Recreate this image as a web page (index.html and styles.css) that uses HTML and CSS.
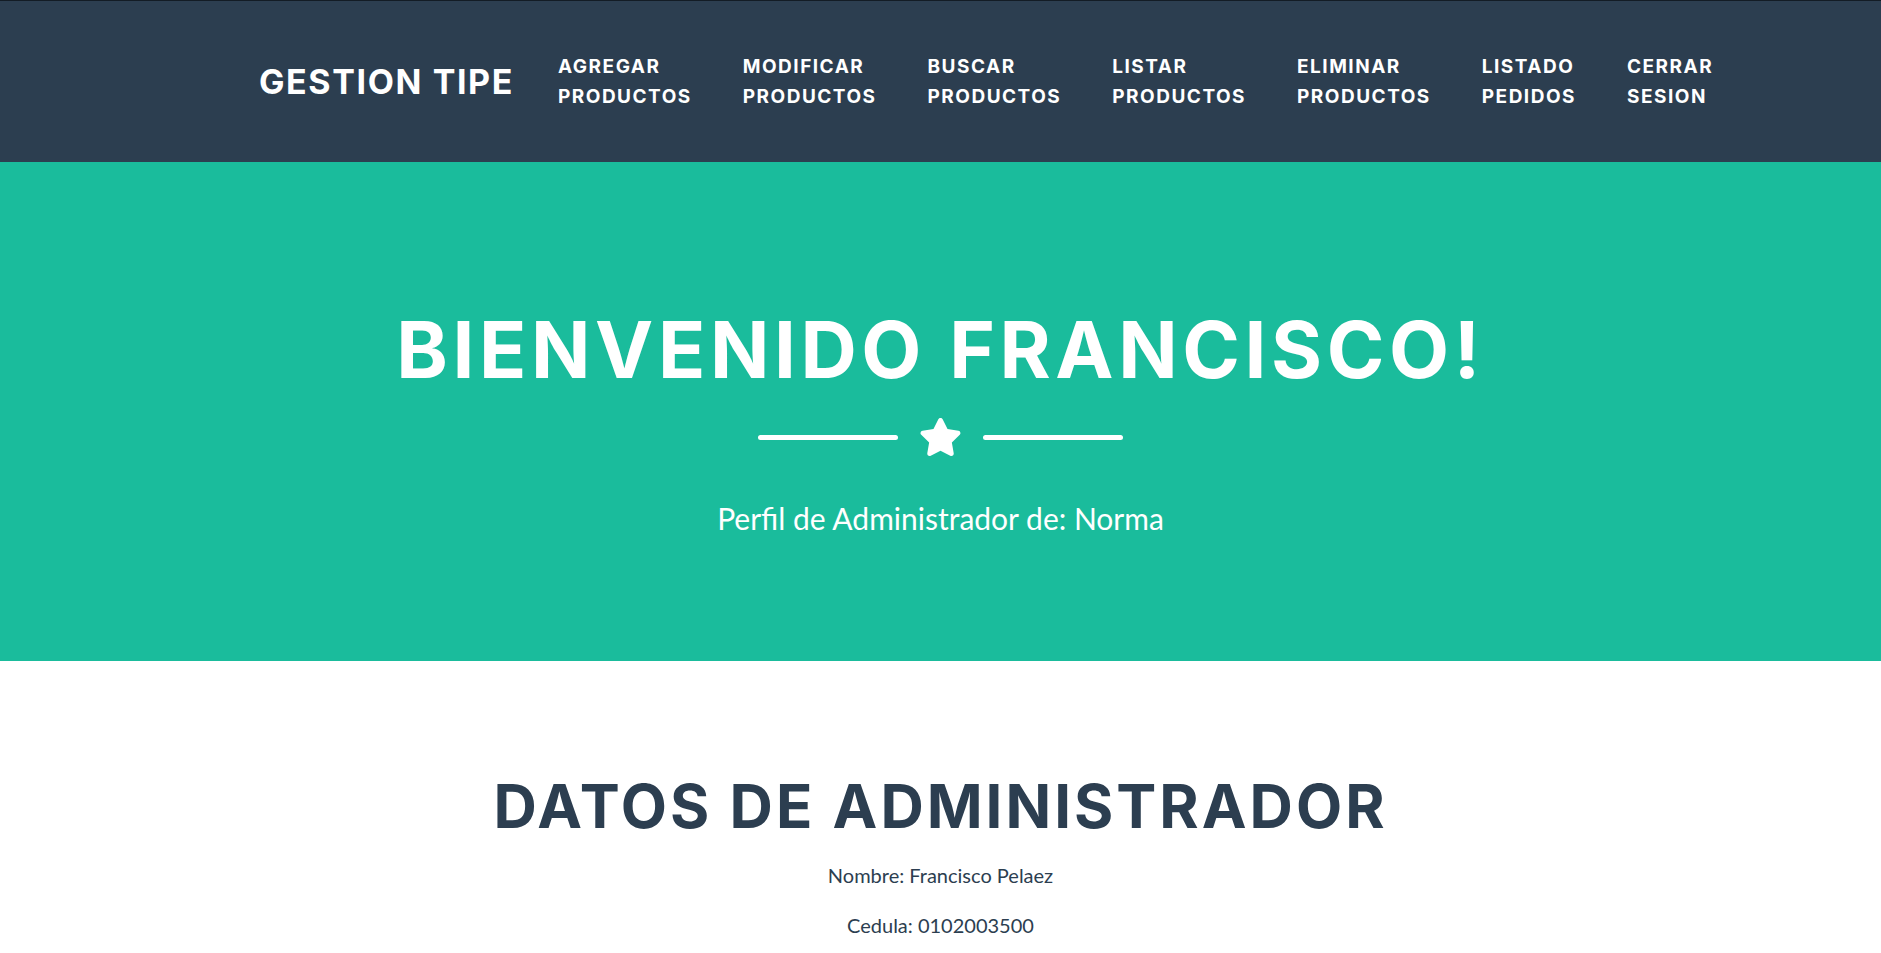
FILE: index.html
```html
<!DOCTYPE html>
<html lang="es">
<head>
<meta charset="utf-8">
<title>Gestion Tipe</title>
<link rel="stylesheet" href="styles.css">
</head>
<body>
<nav class="navbar">
  <div class="nav-inner">
    <a class="brand" href="#">GESTION TIPE</a>
    <ul class="nav-list">
      <li class="nav-item"><a class="nav-link" href="#">AGREGAR PRODUCTOS</a></li>
      <li class="nav-item"><a class="nav-link" href="#">MODIFICAR PRODUCTOS</a></li>
      <li class="nav-item"><a class="nav-link" href="#">BUSCAR PRODUCTOS</a></li>
      <li class="nav-item"><a class="nav-link" href="#">LISTAR PRODUCTOS</a></li>
      <li class="nav-item"><a class="nav-link" href="#">ELIMINAR PRODUCTOS</a></li>
      <li class="nav-item"><a class="nav-link" href="#">LISTADO PEDIDOS</a></li>
      <li class="nav-item"><a class="nav-link" href="#">CERRAR SESION</a></li>
    </ul>
  </div>
</nav>

<header class="masthead">
  <h1 class="masthead-heading">BIENVENIDO FRANCISCO!</h1>
  <div class="divider">
    <div class="divider-line"></div>
    <svg class="divider-icon" viewBox="0 0 576 512" aria-hidden="true"><path fill="#fff" d="M259.3 17.8L194 150.2 47.9 171.5c-26.2 3.8-36.7 36.1-17.7 54.6l105.7 103-25 145.5c-4.5 26.3 23.2 46 46.4 33.7L288 439.6l130.7 68.7c23.2 12.2 50.9-7.4 46.4-33.7l-25-145.5 105.7-103c19-18.5 8.5-50.8-17.7-54.6L382 150.2 316.7 17.8c-11.7-23.6-45.6-23.9-57.4 0z"/></svg>
    <div class="divider-line"></div>
  </div>
  <p class="masthead-subheading">Perfil de Administrador de: Norma</p>
</header>

<section class="page-section">
  <h2 class="section-heading">DATOS DE ADMINISTRADOR</h2>
  <p class="info">Nombre: Francisco Pelaez</p>
  <p class="info">Cedula: 0102003500</p>
</section>
</body>
</html>
```

FILE: styles.css
```css
* { box-sizing: border-box; }

html, body {
  margin: 0;
  padding: 0;
}

body {
  font-family: Lato, "Liberation Sans", sans-serif;
  font-size: 20px;
  line-height: 1.5;
  color: #2c3e50;
  background: #fff;
}

.navbar {
  background: #2c3e50;
  border-top: 1px solid #131c25;
  height: 162px;
  display: flex;
  align-items: center;
}

.nav-inner {
  display: flex;
  align-items: center;
  padding-left: 259px;
}

.brand {
  font-family: Inter, "DejaVu Sans", sans-serif;
  font-weight: 700;
  font-size: 34px;
  letter-spacing: 1.6px;
  color: #fff;
  text-decoration: none;
  line-height: 1;
  margin-right: 44px;
}

.nav-list {
  list-style: none;
  margin: 0;
  padding: 0;
  display: flex;
  align-items: center;
  gap: 51px;
}

.nav-link {
  display: block;
  width: min-content;
  font-family: Inter, "DejaVu Sans", sans-serif;
  font-weight: 700;
  font-size: 19px;
  letter-spacing: 1.5px;
  line-height: 29.5px;
  color: #fff;
  text-decoration: none;
}

.masthead {
  background: #1abc9c;
  color: #fff;
  text-align: center;
  height: 499px;
  padding-top: 148px;
}

.masthead-heading {
  margin: 0;
  font-family: Inter, "DejaVu Sans", sans-serif;
  font-weight: 700;
  font-size: 78px;
  line-height: 80px;
  letter-spacing: 4.6px;
}

.divider {
  display: flex;
  justify-content: center;
  align-items: center;
  margin-top: 27px;
  height: 40px;
}

.divider-line {
  width: 140px;
  height: 5px;
  border-radius: 5px;
  background: #fff;
}

.divider-icon {
  width: 43px;
  height: 40px;
  margin: 0 21px;
}

.masthead-subheading {
  margin: 40px 0 0;
  font-size: 30px;
  line-height: 43.5px;
  font-weight: 400;
}

.page-section {
  text-align: center;
  padding-top: 109px;
}

.section-heading {
  margin: 0 0 18px;
  font-family: Inter, "DejaVu Sans", sans-serif;
  font-weight: 700;
  font-size: 60px;
  line-height: 72px;
  letter-spacing: 3px;
  color: #2c3e50;
}

.info {
  margin: 0 0 20px;
  font-size: 20px;
  line-height: 30px;
}
```
